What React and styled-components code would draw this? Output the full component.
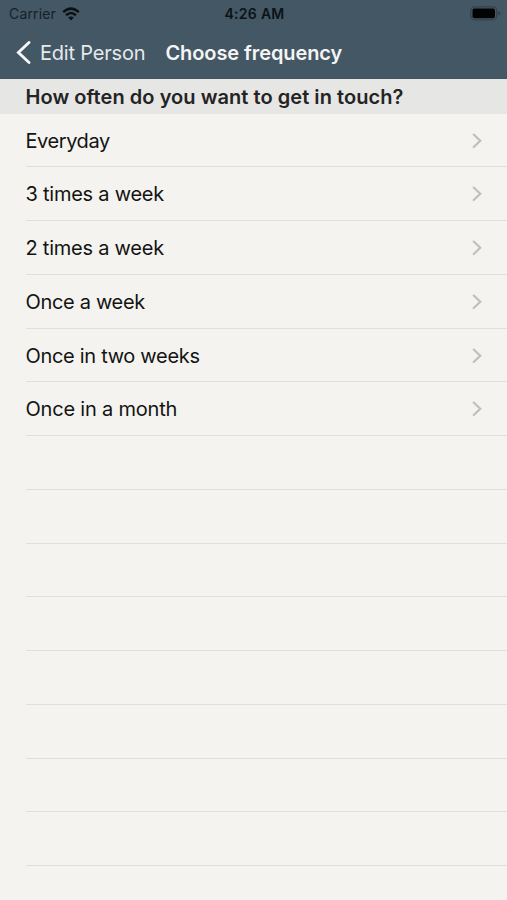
import React from "react";
import styled, { createGlobalStyle } from "styled-components";

const GlobalStyle = createGlobalStyle`
  *, *::before, *::after { box-sizing: border-box; }
  html, body { margin: 0; padding: 0; background: #f4f3ef; }
  body { font-family: Inter, "Liberation Sans", sans-serif; }
`;

const Screen = styled.main`
  width: 507px;
  height: 900px;
  overflow: hidden;
  background: #f4f3ef;
  display: flex;
  flex-direction: column;
`;

const Header = styled.header`
  flex: none;
  height: 79px;
  background: #445764;
  border-bottom: 1px solid #3e5362;
`;

const StatusBar = styled.div`
  height: 26px;
  display: grid;
  grid-template-columns: 1fr auto 1fr;
  align-items: center;
  padding: 2px 7px 0 9px;
  color: #0b1216;
`;

const Network = styled.div`
  display: flex;
  align-items: center;
  gap: 6px;
`;

const Carrier = styled.span`
  font-size: 14px;
  line-height: 18px;
  letter-spacing: 0.15px;
  color: #15202a;
`;

const Clock = styled.time`
  font-size: 14px;
  line-height: 18px;
  font-weight: 600;
  letter-spacing: 0.3px;
`;

const BatteryIcon = styled.svg`
  justify-self: end;
  margin-right: -1px;
  margin-top: -2px;
`;

const NavBar = styled.nav`
  height: 53px;
  display: flex;
  align-items: center;
  padding-left: 16px;
  color: #f4f5f5;
`;

const BackButton = styled.button`
  display: flex;
  align-items: center;
  gap: 9px;
  width: 149.4px;
  border: 0;
  padding: 0;
  background: none;
  color: #e4e9ec;
  font: inherit;
  font-size: 20px;
  line-height: 26px;
  letter-spacing: -0.2px;
  white-space: nowrap;
`;

const Title = styled.h1`
  margin: 0;
  font-size: 20px;
  line-height: 26px;
  font-weight: 600;
  letter-spacing: -0.08px;
  white-space: nowrap;
`;

const SectionHeader = styled.h2`
  flex: none;
  margin: 0;
  height: 34.5px;
  padding-left: 25.5px;
  background: #e6e6e5;
  color: #242424;
  font-size: 20px;
  line-height: 36px;
  font-weight: 600;
  letter-spacing: 0.05px;
  white-space: nowrap;
`;

const List = styled.ul`
  list-style: none;
  margin: 0;
  padding: 0 0 0 26px;
`;

const Row = styled.li`
  height: 53.77px;
  display: flex;
  align-items: center;
  justify-content: space-between;
  padding: 1.4px 25px 0 0;
  border-bottom: 1px solid #dfdfdc;
`;

const Label = styled.span`
  margin-left: -0.5px;
  color: #131313;
  font-size: 20px;
  line-height: 26px;
  letter-spacing: ${(p) => p.$tracking}px;
  white-space: nowrap;
`;

const options = [
  { label: "Everyday", tracking: -0.42 },
  { label: "3 times a week", tracking: -0.24 },
  { label: "2 times a week", tracking: -0.24 },
  { label: "Once a week", tracking: -0.32 },
  { label: "Once in two weeks", tracking: -0.31 },
  { label: "Once in a month", tracking: -0.2 },
];

const emptyRows = Array.from({ length: 9 }, (_, i) => i);

const Wifi = () => (
  <svg width="18" height="14" viewBox="0 0 18 14" fill="none" stroke="#0b1216" strokeWidth="2.5">
    <path d="M1.2 5.1 Q9 -1.8 16.8 5.1" />
    <path d="M4.1 8.2 Q9 3.8 13.9 8.2" />
    <path d="M9 13.4 L6.2 10.6 Q9 8.2 11.8 10.6 Z" fill="#0b1216" stroke="none" />
  </svg>
);

const Battery = () => (
  <BatteryIcon width="31" height="15" viewBox="0 0 31 15">
    <rect x="0.8" y="0.8" width="26" height="13" rx="4" fill="none" stroke="#33434e" strokeWidth="1.3" />
    <rect x="2.5" y="2.6" width="22.5" height="9.6" rx="2" fill="#020404" />
    <path d="M28.5 5.2 Q30.3 6 30.3 7.4 Q30.3 8.8 28.5 9.6 Z" fill="#2f3e49" />
  </BatteryIcon>
);

const BackChevron = () => (
  <svg width="15" height="24" viewBox="0 0 15 24" fill="none" stroke="#f4f6f7" strokeWidth="2.9" strokeLinecap="round" strokeLinejoin="miter">
    <path d="M13 1.5 L2.4 11.5 L13 21.5" />
  </svg>
);

const Disclosure = () => (
  <svg width="10" height="16" viewBox="0 0 10 16" fill="none" stroke="#bebebb" strokeWidth="2.1" strokeLinecap="round">
    <path d="M1.7 1.5 L8.3 7.8 L1.7 14.1" />
  </svg>
);

export default function App() {
  return (
    <>
      <GlobalStyle />
      <Screen>
        <Header>
          <StatusBar>
            <Network>
              <Carrier>Carrier</Carrier>
              <Wifi />
            </Network>
            <Clock>4:26 AM</Clock>
            <Battery />
          </StatusBar>
          <NavBar>
            <BackButton>
              <BackChevron />
              Edit Person
            </BackButton>
            <Title>Choose frequency</Title>
          </NavBar>
        </Header>
        <SectionHeader>How often do you want to get in touch?</SectionHeader>
        <List>
          {options.map((o) => (
            <Row key={o.label}>
              <Label $tracking={o.tracking}>{o.label}</Label>
              <Disclosure />
            </Row>
          ))}
          {emptyRows.map((i) => (
            <Row key={i} />
          ))}
        </List>
      </Screen>
    </>
  );
}
